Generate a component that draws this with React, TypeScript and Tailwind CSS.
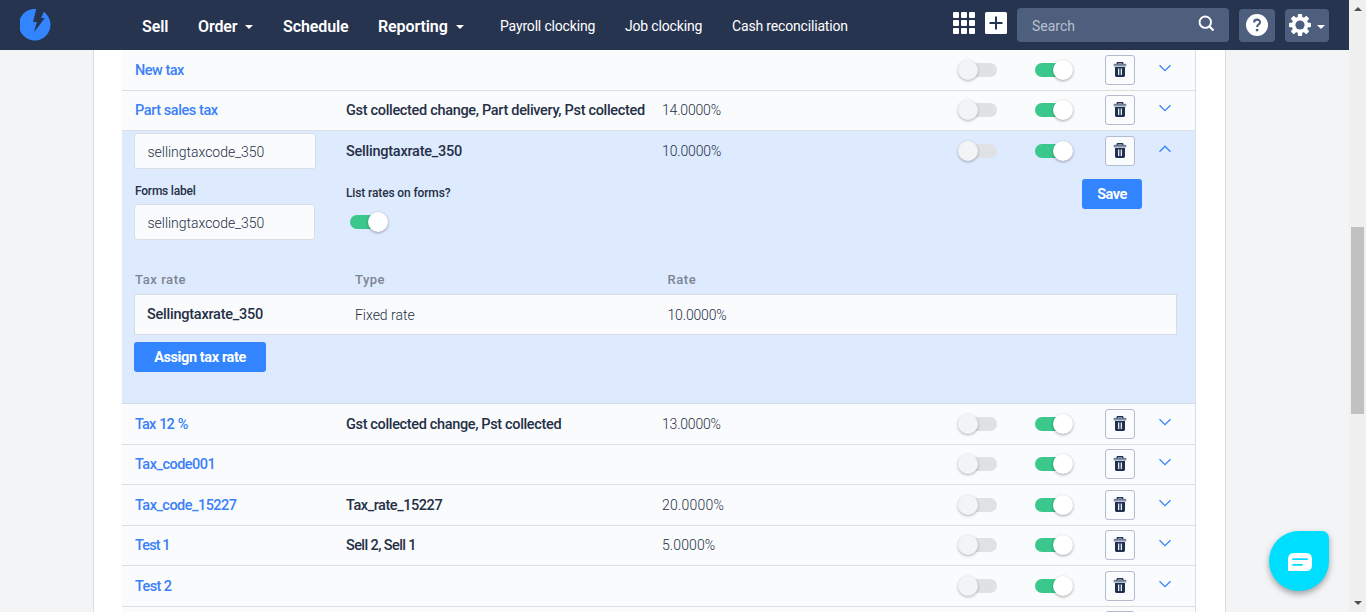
import React from "react";

type Row = {
  name: string;
  nameCls: string;
  rates?: string;
  ratesCls?: string;
  rate?: string;
  rateCls?: string;
  rowCls: string;
};

const before: Row[] = [
  { name: "New tax", nameCls: "tracking-[-0.5px]", rowCls: "h-[41px] pt-[5px]" },
  {
    name: "Part sales tax",
    nameCls: "tracking-[-0.43px]",
    rates: "Gst collected change, Part delivery, Pst collected",
    ratesCls: "tracking-[-0.32px]",
    rate: "14.0000%",
    rateCls: "tracking-[-0.18px]",
    rowCls: "h-10 pt-1",
  },
];

const after: Row[] = [
  {
    name: "Tax 12 %",
    nameCls: "tracking-[-0.85px] [word-spacing:1px]",
    rates: "Gst collected change, Pst collected",
    ratesCls: "tracking-[-0.35px]",
    rate: "13.0000%",
    rateCls: "tracking-[-0.2px]",
    rowCls: "h-[41px] pt-[5px]",
  },
  { name: "Tax_code001", nameCls: "tracking-[-0.52px]", rowCls: "h-10 pt-1" },
  {
    name: "Tax_code_15227",
    nameCls: "tracking-[-0.53px]",
    rates: "Tax_rate_15227",
    ratesCls: "tracking-[-0.45px]",
    rate: "20.0000%",
    rateCls: "tracking-[0.22px]",
    rowCls: "h-[41px] pt-[5px]",
  },
  {
    name: "Test 1",
    nameCls: "tracking-[-0.9px]",
    rates: "Sell 2, Sell 1",
    ratesCls: "tracking-[-0.6px]",
    rate: "5.0000%",
    rateCls: "tracking-[0.1px]",
    rowCls: "h-10 pt-1",
  },
  { name: "Test 2", nameCls: "tracking-[-0.62px]", rowCls: "h-[41px] pt-[5px]" },
  { name: "", nameCls: "", rowCls: "h-10 pt-1" },
];

function Toggle({ on = false }: { on?: boolean }) {
  return on ? (
    <span className="flex h-3.5 w-9 items-center rounded-full bg-[#3ac88c]">
      <span className="ml-[18px] size-5 shrink-0 rounded-full bg-white shadow-[0_1px_3px_rgba(0,0,0,0.35)]" />
    </span>
  ) : (
    <span className="ml-0.5 flex h-3.5 w-[37px] items-center rounded-full bg-[#dfe1e5]">
      <span className="-ml-0.5 size-5 shrink-0 rounded-full bg-[#f3f4f6] shadow-[0_1px_3px_rgba(0,0,0,0.3)]" />
    </span>
  );
}

function TrashButton() {
  return (
    <button className="flex size-[30px] items-center justify-center rounded-[3px] border border-[#b3bccd] bg-[#fafbfd]">
      <svg width="14" height="16" viewBox="0 0 14 16" className="mb-px shrink-0">
        <path d="M4.2 2.4V1.2Q4.2.7 4.7.7H9.3Q9.8.7 9.8 1.2V2.4" fill="none" stroke="#1f3054" strokeWidth="1.4" />
        <rect x=".7" y="2" width="12.6" height="2.4" rx=".5" fill="#8492aa" />
        <path d="M.9 2.3H13.1" stroke="#53627f" strokeWidth=".6" />
        <path d="M2 5H12V13.6Q12 15 10.6 15H3.4Q2 15 2 13.6Z" fill="#1f3054" />
        <path d="M5.7 6.6V13M8.3 6.6V13" stroke="#fff" strokeWidth="1.2" />
      </svg>
    </button>
  );
}

function Chevron({ up = false }: { up?: boolean }) {
  return (
    <svg width="12" height="8" viewBox="0 0 12 8" className="mb-1">
      <path d={up ? "M.5 6.7 6 1.2 11.5 6.7" : "M.5 1.2 6 6.7 11.5 1.2"} fill="none" stroke="#3584fc" strokeWidth="1.3" />
    </svg>
  );
}

function Controls({ open = false }: { open?: boolean }) {
  return (
    <>
      <div className="w-[77px] shrink-0"><Toggle /></div>
      <div className="w-[70px] shrink-0"><Toggle on /></div>
      <div className="w-[54px] shrink-0"><TrashButton /></div>
      <Chevron up={open} />
    </>
  );
}

function TaxRow({ row }: { row: Row }) {
  return (
    <div className={"shrink-0 border-b border-[#dbdee3] bg-[#fafbfd] pl-[13px] " + row.rowCls}>
      <div className="flex h-[30px] items-center whitespace-nowrap">
        <a className={"w-[211px] shrink-0 pt-0.5 text-[14.5px] font-medium text-[#3a80f8] " + row.nameCls}>{row.name}</a>
        <div className={"w-[316px] shrink-0 pt-0.5 text-[14.5px] font-medium text-[#253046] " + (row.ratesCls ?? "")}>{row.rates}</div>
        <div className={"w-[296px] shrink-0 text-sm font-light text-[#253046] " + (row.rateCls ?? "")}>{row.rate}</div>
        <Controls />
      </div>
    </div>
  );
}

function Field({ className }: { className: string }) {
  return (
    <div className={"flex h-9 shrink-0 items-center rounded-[3px] border border-[#d9dde4] bg-[#fafbfd] pt-0.5 pl-[12.5px] text-sm font-light tracking-[-0.03px] text-[#253046] " + className}>
      sellingtaxcode_350
    </div>
  );
}

function ExpandedRow() {
  return (
    <div className="h-[273px] shrink-0 border-b border-[#d5dbe6] bg-[#deeafe] pl-3 whitespace-nowrap">
      <div className="flex h-10 items-start">
        <Field className="mt-0.5 w-[182px]" />
        <div className="ml-[30px] flex h-10 items-center">
          <div className="w-[316px] shrink-0 pt-0.5 text-[14.5px] font-medium tracking-[-0.24px] text-[#253046]">Sellingtaxrate_350</div>
          <div className="w-[296px] shrink-0 text-sm font-light tracking-[-0.14px] text-[#253046]">10.0000%</div>
          <Controls open />
        </div>
      </div>
      <div className="flex items-start">
        <div className="w-[212px] shrink-0 pt-3">
          <div className="ml-px text-xs leading-4 font-medium tracking-[-0.22px] text-[#253046]">Forms label</div>
          <Field className="mt-[5px] w-[181px]" />
        </div>
        <div className="w-[736px] shrink-0 pt-3.5">
          <div className="mb-3.5 text-xs leading-4 font-medium tracking-[-0.13px] text-[#253046]">List rates on forms?</div>
          <div className="ml-1"><Toggle on /></div>
        </div>
        <button className="mt-2 h-[30px] w-[60px] rounded-[3px] bg-[#3284ff] pt-0.5 text-[14.5px] font-bold tracking-[-0.5px] text-white">Save</button>
      </div>
      <div className="mt-8 flex text-[13px] leading-4 font-medium text-[#7d8593]">
        <div className="w-[221px] pl-px tracking-[0.57px]">Tax rate</div>
        <div className="w-[312.5px] tracking-[0.5px]">Type</div>
        <div className="tracking-[0.55px]">Rate</div>
      </div>
      <div className="mt-1.5 flex h-[41px] w-[1043px] items-center border border-[#d7dce4] bg-[#fafbfd] pl-3 text-sm font-light text-[#253046]">
        <div className="w-[208px] pt-0.5 text-[14.5px] font-medium tracking-[-0.24px]">Sellingtaxrate_350</div>
        <div className="w-[312.5px] pt-px tracking-[-0.02px]">Fixed rate</div>
        <div className="pt-px tracking-[-0.16px]">10.0000%</div>
      </div>
      <button className="mt-[7px] block h-[30px] w-[132px] rounded-[3px] bg-[#3284ff] pt-0.5 text-[14.5px] font-bold tracking-[-0.4px] text-white">
        Assign tax rate
      </button>
    </div>
  );
}

function Caret() {
  return <span className="h-0 w-0 border-x-4 border-t-4 border-x-transparent border-t-white" />;
}

function Header() {
  return (
    <header className="flex h-[50px] shrink-0 items-center bg-[#27344f] pl-5 whitespace-nowrap text-white">
      <svg width="32" height="32" viewBox="0 0 32 32" className="mr-[90px] shrink-0">
        <path
          d="M16.2 0 13 13H16.9L14 23.3 24.8 8.9H21.2L23.8 2.8A15.8 15.8 0 1 1 16.2 0Z"
          fill="#3284ff"
        />
      </svg>
      <nav className="flex items-center">
        <div className="flex gap-[30px] pt-[3px] text-base font-semibold tracking-[-0.1px]">
          <a className="w-[26px]">Sell</a>
          <a className="flex w-[55px] items-center justify-between">Order<Caret /></a>
          <a className="w-[65px]">Schedule</a>
          <a className="flex w-[86px] items-center justify-between">Reporting<Caret /></a>
        </div>
        <div className="ml-9 flex gap-[30px] pt-px text-sm tracking-[-0.17px]">
          <a className="w-[95px]">Payroll clocking</a>
          <a className="w-[77px]">Job clocking</a>
          <a className="w-[116px]">Cash reconciliation</a>
        </div>
      </nav>
      <div className="ml-[105px] grid shrink-0 grid-cols-3 gap-0.5 pb-1">
        {Array.from({ length: 9 }, (_, i) => (
          <span key={i} className="size-1.5 rounded-[1px] bg-white" />
        ))}
      </div>
      <svg width="22" height="22" viewBox="0 0 22 22" className="mb-1 ml-2.5 shrink-0">
        <rect width="22" height="22" rx="1.5" fill="#fff" />
        <path d="M11 4.5V17.5M4.5 11H17.5" stroke="#27344f" strokeWidth="2" />
      </svg>
      <div className="ml-2.5 flex h-[34px] w-[212px] shrink-0 items-center justify-between rounded-[4px] bg-[#4e5e7d] pr-3.5 pl-[15px]">
        <span className="pt-0.5 text-sm text-[#b9c0ce]">Search</span>
        <svg width="17" height="17" viewBox="0 0 17 17" className="mb-1">
          <circle cx="7.3" cy="7.2" r="5.7" fill="none" stroke="#fff" strokeWidth="1.9" />
          <path d="m11.5 11.5 4 4" stroke="#fff" strokeWidth="2.2" />
        </svg>
      </div>
      <div className="mt-px ml-2.5 flex h-[33px] w-9 shrink-0 items-center justify-center rounded-[4px] bg-[#4e5e7d]">
        <svg width="22" height="22" viewBox="0 0 22 22" className="mb-px">
          <circle cx="11" cy="11" r="11" fill="#fff" />
          <path d="M8.1 8.6C8.1 4.6 14 4.7 14 8.2 14 10.6 11.1 10.5 11.1 13" fill="none" stroke="#4e5e7d" strokeWidth="2.1" />
          <circle cx="11.1" cy="16.1" r="1.4" fill="#4e5e7d" />
        </svg>
      </div>
      <div className="mt-px ml-2.5 flex h-[33px] w-11 shrink-0 items-center rounded-[4px] bg-[#4e5e7d] pl-1">
        <svg width="22" height="22" viewBox="0 0 22 22" className="mb-px">
          <g fill="#fff">
            <rect x="8.8" width="4.4" height="22" rx="1" />
            <rect x="8.8" width="4.4" height="22" rx="1" transform="rotate(45 11 11)" />
            <rect x="8.8" width="4.4" height="22" rx="1" transform="rotate(90 11 11)" />
            <rect x="8.8" width="4.4" height="22" rx="1" transform="rotate(135 11 11)" />
            <circle cx="11" cy="11" r="8.3" />
          </g>
          <circle cx="11" cy="11" r="4.6" fill="#4e5e7d" />
        </svg>
        <span className="mt-0.5 ml-1.5 h-0 w-0 border-x-4 border-t-4 border-x-transparent border-t-white" />
      </div>
    </header>
  );
}

function Scrollbar() {
  return (
    <div className="flex h-full w-[17px] shrink-0 flex-col items-center bg-[#f0f0f0]">
      <span className="mt-[7px] h-0 w-0 border-x-4 border-b-4 border-x-transparent border-b-[#505050]" />
      <span className="mt-[216px] h-[187px] w-[13px] bg-[#c1c1c1]" />
      <span className="mt-auto mb-[7px] h-0 w-0 border-x-4 border-t-4 border-x-transparent border-t-[#505050]" />
    </div>
  );
}

export default function App() {
  return (
    <div className="relative flex h-[612px] w-[1366px] overflow-hidden font-['Roboto',sans-serif]">
      <div className="flex w-[1349px] shrink-0 flex-col">
        <Header />
        <main className="flex min-h-0 flex-1 bg-[#f3f4f6] pl-[93px]">
          <div className="w-[1133px] overflow-hidden border-x border-[#dadde4] bg-white pl-7">
            <div className="flex h-full w-[1074px] flex-col overflow-hidden border-r border-[#dadde4]">
              {before.map((r) => <TaxRow key={r.name} row={r} />)}
              <ExpandedRow />
              {after.map((r) => <TaxRow key={r.name} row={r} />)}
            </div>
          </div>
        </main>
      </div>
      <Scrollbar />
      <button className="absolute right-[37px] bottom-[21px] flex size-[60px] items-center justify-center rounded-[30px] rounded-tr-[7px] bg-[#00deff] shadow-[0_3px_6px_rgba(0,0,0,0.35)]">
        <svg width="24" height="18" viewBox="0 0 24 18" className="mt-0.5 ml-0.5">
          <path d="M6 0H18Q24 0 24 6V12Q24 18 18 18H1Q0 18 0 17V6Q0 0 6 0Z" fill="#fff" />
          <path d="M5 6.2H19M5 11.8H14" stroke="#00deff" strokeWidth="1.8" strokeLinecap="round" />
        </svg>
      </button>
    </div>
  );
}
